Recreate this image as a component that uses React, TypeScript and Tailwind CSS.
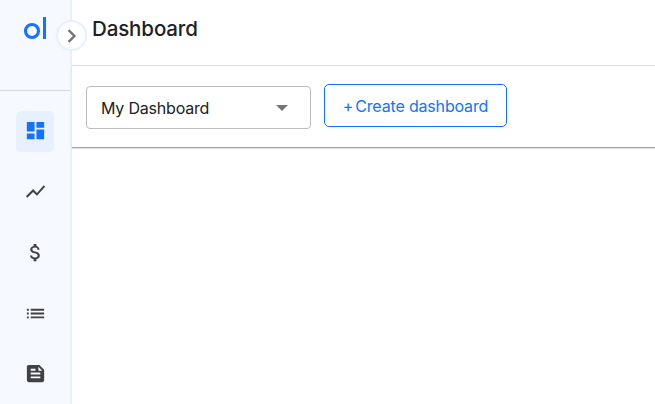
import type { ReactNode } from "react";
import { MdAttachMoney, MdDashboard, MdFeed, MdList, MdShowChart } from "react-icons/md";

function NavItem({ active, children }: { active?: boolean; children: ReactNode }) {
  return (
    <a
      className={
        "flex h-[41px] w-[38px] items-center justify-center rounded-[5px] pb-px pl-px text-[23px] " +
        (active ? "bg-[#e6f0ff] text-[#1273ff]" : "text-[#3f4145]")
      }
    >
      {children}
    </a>
  );
}

export default function App() {
  return (
    <div className="relative flex h-[404px] w-[655px] overflow-hidden bg-white font-['Inter','Liberation_Sans',sans-serif] text-[#202124]">
      <aside className="w-[72px] shrink-0 border-r-2 border-[#e6f0ff] bg-[#f6f9ff]">
        <div className="flex h-[91px] justify-end border-b border-[#d5d8dd] pt-4 pr-[23px]">
          <svg width="24" height="24" viewBox="0 0 24 24" fill="none">
            <circle cx="9" cy="15" r="6.5" stroke="#1273ff" strokeWidth="3.1" />
            <rect x="20" y="1" width="3" height="22" fill="#1273ff" />
          </svg>
        </div>
        <nav className="flex flex-col items-center gap-[19.7px] pt-5">
          <NavItem active><MdDashboard className="mb-px" /></NavItem>
          <NavItem><MdShowChart /></NavItem>
          <NavItem><MdAttachMoney /></NavItem>
          <NavItem><MdList className="mt-px" /></NavItem>
          <NavItem><MdFeed /></NavItem>
        </nav>
      </aside>
      <main className="flex min-w-0 flex-1 flex-col">
        <header className="flex h-[66px] items-center border-b border-[#dedede] pb-[7px] pl-5">
          <h1 className="text-[20.5px] leading-6 font-medium tracking-[-0.12px]">Dashboard</h1>
        </header>
        <div className="flex h-[82px] shrink-0 items-start border-b border-[#a3a3a3] pt-[18px] pl-[14px] shadow-[0_1px_1px_rgba(0,0,0,0.12)]">
          <button className="mt-[2px] flex h-[43px] w-[225px] items-center justify-between rounded-[4px] border border-[#bdbdbd] pr-[22px] pl-[14px] text-[16px] tracking-[-0.2px]">
            My Dashboard
            <svg width="12" height="6" viewBox="0 0 12 6">
              <path d="M0 0h12L6 6z" fill="#757575" />
            </svg>
          </button>
          <button className="ml-[13px] flex h-[43px] w-[183px] items-center justify-center gap-[2px] rounded-[5px] border border-[#1273ff] text-[16px] tracking-[-0.17px] text-[#1273ff]">
            <span className="text-[16px]">+</span>
            <span>Create dashboard</span>
          </button>
        </div>
      </main>
      <button className="absolute top-5 left-14 flex size-[31px] items-center justify-center rounded-full border-2 border-[#e6f0ff] bg-white">
        <svg width="10" height="14" viewBox="0 0 10 14" fill="none" stroke="#757575" strokeWidth="2.4">
          <path d="M1.6 1.2 7.4 7 1.6 12.8" />
        </svg>
      </button>
    </div>
  );
}
